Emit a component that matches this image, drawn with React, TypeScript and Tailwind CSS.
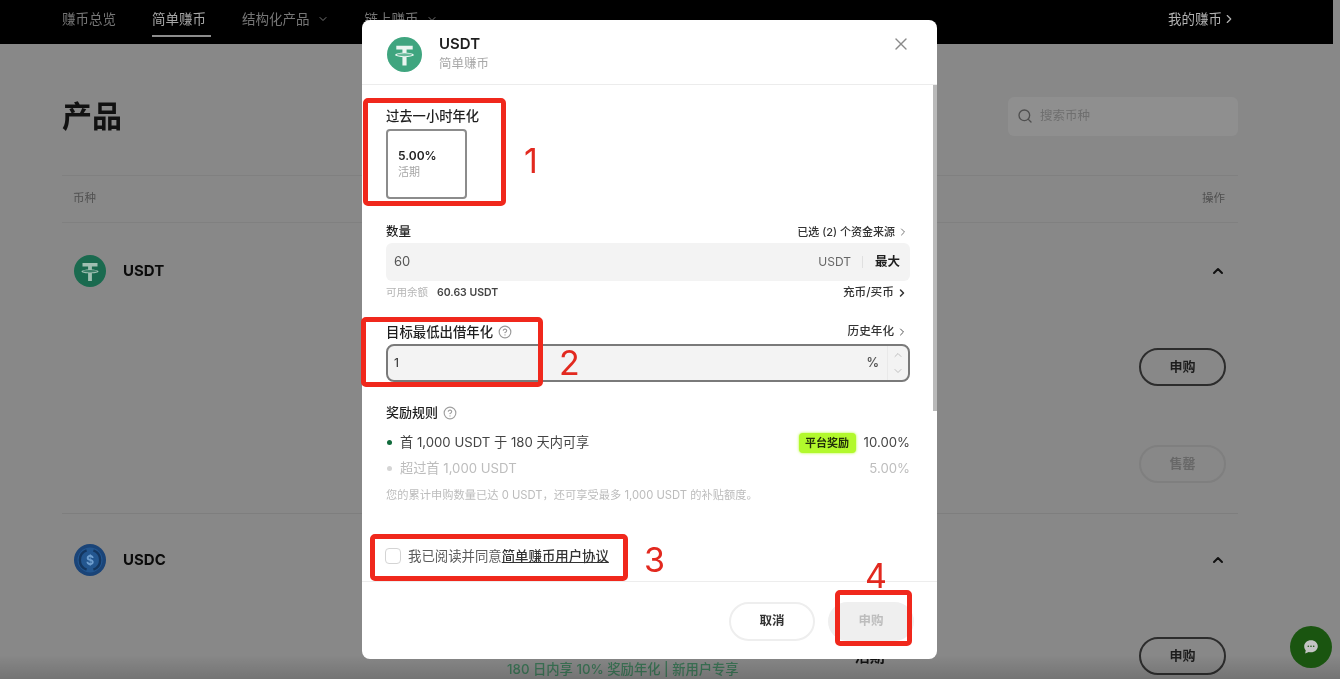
import React from 'react';
import { ChevronDown, ChevronRight, ChevronUp, CircleHelp, Search, X } from 'lucide-react';

const FONT = "font-['Inter','Noto_Sans_CJK_SC',sans-serif]";

const UsdtLogo: React.FC<{ size: number; bg: string; fg: string }> = ({ size, bg, fg }) => (
    <svg width={size} height={size} viewBox="0 0 32 32" className="shrink-0">
        <circle cx="16" cy="16" r="16" fill={bg} />
        <path d="M8.5 8h15v3.4h-5.6v3.1c3.2.2 6.6.9 6.6 1.9s-3.4 1.7-6.6 1.9V26h-3.8v-7.7c-3.2-.2-6.6-.9-6.6-1.9s3.4-1.7 6.6-1.9v-3.1H8.5z" fill={fg} />
        <ellipse cx="16" cy="16.2" rx="7" ry="1.3" fill={bg} opacity="0.75" />
    </svg>
);

const UsdcLogo: React.FC = () => (
    <svg width="32" height="32" viewBox="0 0 32 32" className="shrink-0">
        <circle cx="16" cy="16" r="16" fill="#1a4478" />
        <circle cx="16" cy="16" r="12.5" fill="#23568f" />
        <path d="M12.6 6.4a10.2 10.2 0 0 0 0 19.2M19.4 6.4a10.2 10.2 0 0 1 0 19.2" fill="none" stroke="#14365f" strokeWidth="2.4" />
        <text x="16" y="20.5" textAnchor="middle" fontSize="12.5" fontWeight="700" fill="#6f9fd0" fontFamily="Inter">$</text>
    </svg>
);

const OutlineButton: React.FC<{ label: string; muted?: boolean }> = ({ label, muted }) => (
    <div className={`flex h-[38px] w-[87px] items-center justify-center rounded-full border-2 text-[13px] font-bold ${muted ? 'border-[#7f7f7f] text-[#686868]' : 'border-[#2c2c2c] text-[#1c1c1c]'}`}>
        {label}
    </div>
);

const RedBox: React.FC<{ className: string }> = ({ className }) => (
    <div className={`absolute rounded-[5px] border-[5px] border-[#f0281c] ${className}`} />
);

const StepNumber: React.FC<{ n: string; className: string }> = ({ n, className }) => (
    <div className={`absolute text-[34px] leading-[40px] text-[#e2291f] ${className}`}>{n}</div>
);

const Page: React.FC = () => (
    <>
        <div className="flex h-11 w-[1333px] items-center justify-between bg-black pb-[6px] pl-[62px] pr-[97px] text-[13.5px] text-[#767676]">
            <div className="flex items-center gap-9">
                <span>赚币总览</span>
                <span className="relative text-[#a6a6a6]">
                    简单赚币
                    <span className="absolute left-0 top-[26px] h-[2px] w-[59px] bg-[#8c8c8c]" />
                </span>
                <span className="flex items-center gap-[7px]">结构化产品 <ChevronDown className="h-3 w-3" /></span>
                <span className="flex items-center gap-[7px]">链上赚币 <ChevronDown className="h-3 w-3" /></span>
            </div>
            <span className="flex items-center text-[#b2b2b2]">我的赚币 <ChevronRight className="h-[14px] w-[14px]" /></span>
        </div>

        <div className="ml-[62px] w-[1176px] pt-[52px]">
            <div className="flex h-10 items-center justify-between">
                <h1 className="text-[30px] font-bold leading-10 text-[#111111]">产品</h1>
                <div className="flex h-[39px] w-[230px] items-center gap-[7px] rounded-md bg-[#8f8f8f] pl-[9px] text-[12.5px] text-[#6f6f6f]">
                    <Search className="h-4 w-4 text-[#4f4f4f]" />
                    搜索币种
                </div>
            </div>

            <div className="mt-[39px] flex h-12 items-center justify-between border-y border-[#808080] pl-[11px] pr-[13px] text-[11.5px] text-[#505050]">
                <span>币种</span>
                <span>操作</span>
            </div>

            <div className="h-[291px] border-b border-[#7e7e7e] px-3 pt-8">
                <div className="flex items-center justify-between">
                    <div className="flex items-center gap-[17px]">
                        <UsdtLogo size={32} bg="#1a6a4f" fg="#a0bfb2" />
                        <span className="text-[15px] font-bold text-[#0b0b0b]">USDT</span>
                    </div>
                    <ChevronUp className="h-4 w-4 text-[#111111]" strokeWidth={3} />
                </div>
                <div className="mt-[61px] flex flex-col items-end gap-[59px]">
                    <OutlineButton label="申购" />
                    <OutlineButton label="售罄" muted />
                </div>
            </div>

            <div className="px-3 pt-[30px]">
                <div className="flex items-center justify-between">
                    <div className="flex items-center gap-[17px]">
                        <UsdcLogo />
                        <span className="text-[15px] font-bold text-[#0b0b0b]">USDC</span>
                    </div>
                    <ChevronUp className="h-4 w-4 text-[#111111]" strokeWidth={3} />
                </div>
                <div className="flex items-start">
                    <div className="ml-[433px] mt-[85px] text-[13.3px] font-medium leading-4 text-[#3b7355]">180 日内享 10% 奖励年化 | 新用户专享</div>
                    <div className="ml-[116px] mt-[71px] text-[15px] font-bold leading-5 text-[#111111]">活期</div>
                    <div className="ml-auto mt-[61px]"><OutlineButton label="申购" /></div>
                </div>
            </div>
        </div>

        <div className="absolute inset-x-0 bottom-0 h-6 bg-gradient-to-b from-transparent to-black/15" />
    </>
);

const Modal: React.FC = () => (
    <div className="absolute left-[362px] top-5 h-[639px] w-[575px] overflow-hidden rounded-lg bg-white text-[#1f1f1f]">
        <div className="flex h-[65px] items-start justify-between border-b border-[#ececec] pl-[25px] pr-[26px]">
            <div className="mt-[15px] flex items-center gap-[17px]">
                <UsdtLogo size={35} bg="#3fa57f" fg="#eaf5f0" />
                <div className="-mt-px">
                    <div className="text-[15px] font-semibold leading-[20px]">USDT</div>
                    <div className="mt-[1px] text-[12.5px] leading-[18px] text-[#a8a8a8]">简单赚币</div>
                </div>
            </div>
            <X className="mt-[14px] h-5 w-5 text-[#8a8a8a]" strokeWidth={1.6} />
        </div>

        {/* scrollbar thumb */}
        <div className="absolute right-0 top-[65px] h-[326px] w-1 bg-[#b9b9b9]" />

        <div className="pl-6 pr-[27px] pt-[22px]">
            <div className="text-[13.3px] font-medium leading-[18px]">过去一小时年化</div>
            <div className="mt-1 flex h-[70px] w-[81px] flex-col justify-center rounded border-2 border-[#8c8c8c] pl-[10px]">
                <div className="text-[12px] font-semibold leading-4">5.00%</div>
                <div className="text-[11px] leading-4 text-[#a6a6a6]">活期</div>
            </div>

            <div className="mt-[24px] flex h-[18px] items-center justify-between">
                <span className="text-[12.5px] font-medium">数量</span>
                <span className="mr-[1px] flex items-center gap-[2px] text-[11px] font-medium text-[#333333]">已选 (2) 个资金来源 <ChevronRight className="h-3 w-3 text-[#777777]" /></span>
            </div>
            <div className="mt-[2px] flex h-[38px] items-center justify-between rounded-md bg-[#f3f3f3] pl-2 pr-[10px]">
                <span className="text-[13px] text-[#555555]">60</span>
                <div className="flex items-center">
                    <span className="text-[12px] text-[#666666]">USDT</span>
                    <span className="mx-[11px] h-3 w-px bg-[#e0e0e0]" />
                    <span className="ml-[1px] text-[12.5px] font-bold">最大</span>
                </div>
            </div>
            <div className="mt-[4px] flex h-4 items-center justify-between text-[10.5px]">
                <span className="flex items-center gap-[9px]">
                    <span className="text-[#b5b5b5]">可用余额</span>
                    <span className="font-semibold text-[#444444]">60.63 USDT</span>
                </span>
                <span className="mr-[2px] flex items-center gap-[2px] text-[11.7px] font-medium text-[#333333]">充币/买币 <ChevronRight className="h-3 w-3" strokeWidth={3} /></span>
            </div>

            <div className="mt-[22px] flex h-[18px] items-center justify-between">
                <span className="flex items-center gap-[5px] text-[13.4px] font-medium">目标最低出借年化 <CircleHelp className="h-[14px] w-[14px] text-[#9a9a9a]" /></span>
                <span className="mr-[2px] flex items-center gap-[2px] text-[11.6px] font-medium text-[#333333]">历史年化 <ChevronRight className="h-3 w-3 text-[#555555]" /></span>
            </div>
            <div className="mt-[3px] flex h-[38px] items-center justify-between rounded-lg border-2 border-[#7a7a7a] bg-[#f3f3f3] pl-[6px]">
                <span className="text-[12px] font-medium text-[#444444]">1</span>
                <div className="flex h-full items-center">
                    <span className="text-[12.5px] font-semibold text-[#555555]">%</span>
                    <div className="ml-2 flex h-full w-[21px] flex-col items-center justify-center gap-[4px] border-l border-[#e9e9e9]">
                        <ChevronUp className="h-3 w-3 text-[#c0c0c0]" />
                        <ChevronDown className="h-3 w-3 text-[#c0c0c0]" />
                    </div>
                </div>
            </div>

            <div className="mt-[22px] flex h-[18px] items-center gap-[5px] text-[13px] font-medium">
                奖励规则 <CircleHelp className="h-[14px] w-[14px] text-[#a0a0a0]" />
            </div>
            <div className="mt-[11px] flex h-5 items-center justify-between text-[13.2px] text-[#444444]">
                <span className="flex items-center gap-[8px]">
                    <span className="ml-[1px] h-[5px] w-[5px] rounded-full bg-[#116b3c]" />
                    首 1,000 USDT 于 180 天内可享
                </span>
                <span className="flex items-center gap-2">
                    <span className="flex h-5 w-[57px] items-center justify-center rounded bg-[#b2f92c] text-[11px] font-bold text-[#22300a] shadow-[0_0_3px_#b2f92c]">平台奖励</span>
                    10.00%
                </span>
            </div>
            <div className="mt-[6px] flex h-5 items-center justify-between text-[13.2px] text-[#bdbdbd]">
                <span className="flex items-center gap-[8px]">
                    <span className="ml-[1px] h-[5px] w-[5px] rounded-full bg-[#d5d5d5]" />
                    超过首 1,000 USDT
                </span>
                <span>5.00%</span>
            </div>
            <div className="mt-2 h-4 text-[11.25px] leading-4 text-[#bcbcbc]">您的累计申购数量已达 0 USDT，还可享受最多 1,000 USDT 的补贴额度。</div>

            <div className="mt-[43px] flex h-5 items-center gap-[7px] text-[13.4px] text-[#5c5c5c]">
                <span className="-ml-px h-4 w-4 rounded border border-[#d4d4d4]" />
                <span>我已阅读并同意<span className="font-medium text-[#333333] underline">简单赚币用户协议</span></span>
            </div>
        </div>

        <div className="mt-[15px] flex justify-end gap-[13px] border-t border-[#ededed] pr-[23px] pt-5 text-[12.5px] font-bold">
            <div className="flex h-[39px] w-[86px] items-center justify-center rounded-full border-2 border-[#eeeeee] text-[#333333]">取消</div>
            <div className="flex h-[39px] w-[86px] items-center justify-center rounded-full bg-[#efefef] text-[#bdbdbd]">申购</div>
        </div>
    </div>
);

export default function App() {
    return (
        <div className={`relative h-[679px] w-[1340px] overflow-hidden bg-[#888888] blur-[0.7px] ${FONT}`}>
            <Page />
            <Modal />

            <RedBox className="left-[363px] top-[98px] h-[108px] w-[143px]" />
            <RedBox className="left-[361px] top-[317px] h-[70px] w-[182px]" />
            <RedBox className="left-[370px] top-[534px] h-[47px] w-[258px]" />
            <RedBox className="left-[835px] top-[590px] h-[56px] w-[77px]" />
            <StepNumber n="1" className="left-[524px] top-[141px]" />
            <StepNumber n="2" className="left-[559px] top-[343px]" />
            <StepNumber n="3" className="left-[644px] top-[540px]" />
            <StepNumber n="4" className="left-[865px] top-[556px]" />

            <div className="absolute left-[1290px] top-[626px] flex h-[42px] w-[42px] items-center justify-center rounded-full bg-[#1a5510]">
                <svg width="16" height="16" viewBox="0 0 16 16">
                    <path d="M8 1.2c3.9 0 6.8 2.7 6.8 6s-2.9 6-6.8 6c-.8 0-1.5-.1-2.2-.3L2.2 14.6l.5-3.3C1.7 10.2 1.2 8.8 1.2 7.2c0-3.3 2.9-6 6.8-6z" fill="#c4c4c4" />
                    <circle cx="5.3" cy="7.3" r=".8" fill="#1a5510" />
                    <circle cx="8" cy="7.3" r=".8" fill="#1a5510" />
                    <circle cx="10.7" cy="7.3" r=".8" fill="#1a5510" />
                </svg>
            </div>
        </div>
    );
}
